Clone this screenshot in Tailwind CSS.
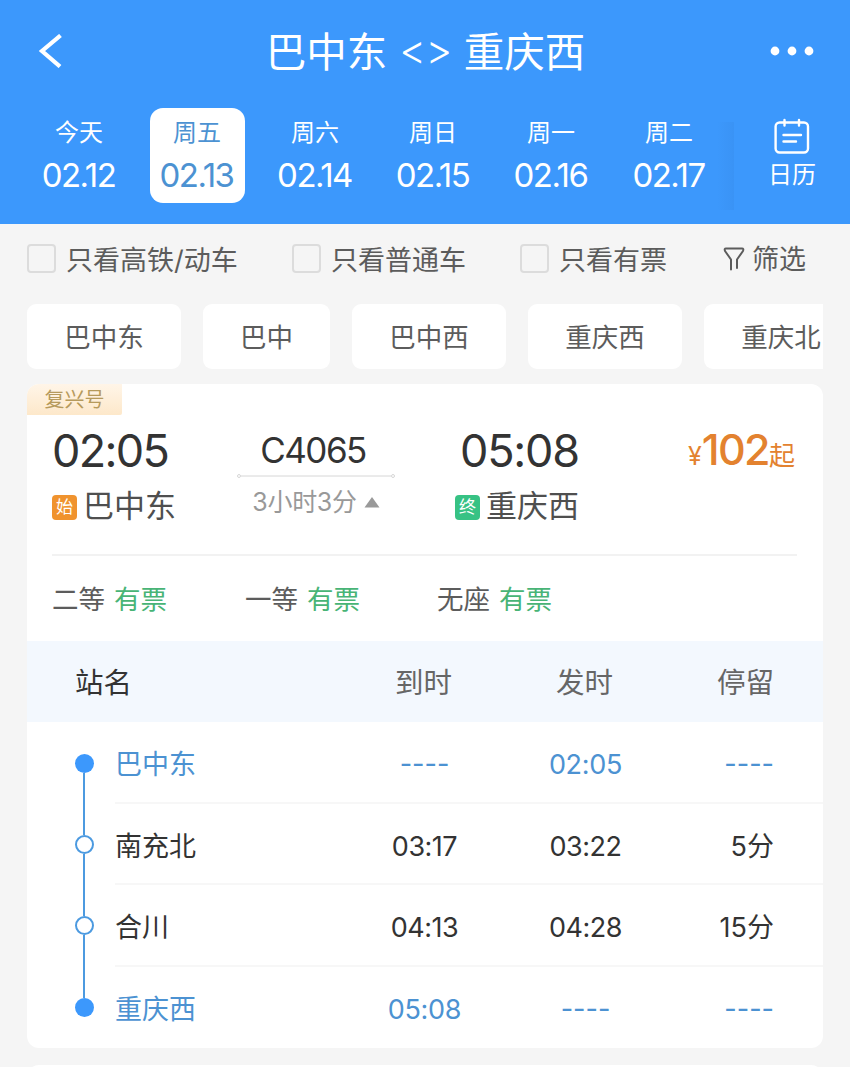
<!DOCTYPE html>
<html lang="zh">
<head>
  <meta charset="UTF-8" />
  <meta name="viewport" content="width=device-width, initial-scale=1.0">
  <title>巴中东 - 重庆西 车次列表</title>
  <script src="https://cdn.jsdelivr.net/npm/@tailwindcss/browser@4"></script>
</head>
<body class="bg-[#f5f5f5] text-[#333] font-['Inter','Noto_Sans_CJK_SC',sans-serif]">
<div class="h-[1067px] overflow-hidden">
  <!-- 顶部导航 + 日期 -->
  <header class="h-[224px] bg-[#3c98fc] text-white">
    <div class="flex h-[102px] items-center justify-between pl-[38px] pr-9">
      <svg class="h-[34px] w-[44px]" viewBox="0 0 44 34" fill="none" stroke="currentColor" stroke-width="4.2"><path d="M22.5 1.5 L4 17 L22 32.5" /></svg>
      <h1 class="mt-[4px] flex items-center gap-[12px] pr-px text-[40.5px] leading-none">
        <span>巴中东</span>
        <span class="pb-[6px] text-[41px] font-light tracking-[-0.5px]">&lt;&gt;</span>
        <span>重庆西</span>
      </h1>
      <svg class="h-[10px] w-[44px]" viewBox="0 0 44 10" fill="currentColor"><circle cx="5" cy="5" r="4.4" /><circle cx="22" cy="5" r="4.4" /><circle cx="39" cy="5" r="4.4" /></svg>
    </div>

    <div class="flex pl-8 pt-[6px]">
      <div class="flex gap-[23px] text-center">
        <div class="h-[95px] w-[95px] rounded-[13px] pt-[9px]">
          <p class="pr-px text-[24px] leading-[32px]">今天</p>
          <p class="mt-[6px] pr-[2px] text-[33px] leading-[40px] tracking-[-1.5px]">02.12</p>
        </div>
        <div class="h-[95px] w-[95px] rounded-[13px] bg-white pt-[9px] text-[#4c92d2]">
          <p class="pr-px text-[24px] leading-[32px]">周五</p>
          <p class="mt-[6px] pr-[2px] text-[33px] leading-[40px] tracking-[-1.5px]">02.13</p>
        </div>
        <div class="h-[95px] w-[95px] rounded-[13px] pt-[9px]">
          <p class="pr-px text-[24px] leading-[32px]">周六</p>
          <p class="mt-[6px] pr-[2px] text-[33px] leading-[40px] tracking-[-1.5px]">02.14</p>
        </div>
        <div class="h-[95px] w-[95px] rounded-[13px] pt-[9px]">
          <p class="pr-px text-[24px] leading-[32px]">周日</p>
          <p class="mt-[6px] pr-[2px] text-[33px] leading-[40px] tracking-[-1.5px]">02.15</p>
        </div>
        <div class="h-[95px] w-[95px] rounded-[13px] pt-[9px]">
          <p class="pr-px text-[24px] leading-[32px]">周一</p>
          <p class="mt-[6px] pr-[2px] text-[33px] leading-[40px] tracking-[-1.5px]">02.16</p>
        </div>
        <div class="h-[95px] w-[95px] rounded-[13px] pt-[9px]">
          <p class="pr-px text-[24px] leading-[32px]">周二</p>
          <p class="mt-[6px] pr-[2px] text-[33px] leading-[40px] tracking-[-1.5px]">02.17</p>
        </div>
      </div>
      <div class="mt-[14px] h-[88px] w-[17px] bg-linear-to-r from-[#3c98fc] to-[#3a93f5]"></div>
      <div class="flex flex-1 flex-col items-center pt-[10px]">
        <svg class="h-[36px] w-[36px]" viewBox="0 0 36 36" fill="none" stroke="currentColor" stroke-width="2.4" stroke-linecap="round"><rect x="1.6" y="4.5" width="32.4" height="30" rx="4" /><path d="M10.5 2V7.5 M25 2V7.5 M9.5 17H27 M9.5 23.5H22" /></svg>
        <p class="text-[24px] leading-[41px]">日历</p>
      </div>
    </div>
  </header>

  <!-- 筛选条件 -->
  <div class="flex h-[80px] items-center pb-[11px] pl-[27px] text-[27px] leading-none text-[#5c5c5c]">
    <div class="flex w-[265px] items-center gap-[10px]">
      <span class="h-[29px] w-[29px] rounded-[4px] border-2 border-[#dcdcdc]"></span>
      <span class="pt-[3px]">只看高铁/动车</span>
    </div>
    <div class="flex w-[228px] items-center gap-[10px]">
      <span class="h-[29px] w-[29px] rounded-[4px] border-2 border-[#dcdcdc]"></span>
      <span class="pt-[3px]">只看普通车</span>
    </div>
    <div class="flex w-[203px] items-center gap-[10px]">
      <span class="h-[29px] w-[29px] rounded-[4px] border-2 border-[#dcdcdc]"></span>
      <span class="pt-[3px]">只看有票</span>
    </div>
    <div class="flex items-center gap-[7px]">
      <svg class="h-[24px] w-[22px]" viewBox="0 0 22 24" fill="none" stroke="currentColor" stroke-width="2" stroke-linejoin="round" stroke-linecap="round"><path d="M8 22.5V12.5L2 4Q1 1.5 3 1.5H19Q21 1.5 20 4L14 12.5V21" /></svg>
      <span class="pt-[2px]">筛选</span>
    </div>
  </div>

  <!-- 车站 -->
  <div class="mx-[27px] flex h-[65px] gap-[22px] overflow-hidden text-[26.5px] leading-[67px] text-[#5c5c5c]">
    <span class="w-[154px] shrink-0 rounded-[9px] bg-white text-center">巴中东</span>
    <span class="w-[127px] shrink-0 rounded-[9px] bg-white text-center">巴中</span>
    <span class="w-[154px] shrink-0 rounded-[9px] bg-white text-center">巴中西</span>
    <span class="w-[154px] shrink-0 rounded-[9px] bg-white text-center">重庆西</span>
    <span class="w-[154px] shrink-0 rounded-[9px] bg-white text-center">重庆北</span>
  </div>

  <!-- 车次卡片 -->
  <section class="mx-[27px] mt-[15px] h-[664px] overflow-hidden rounded-[12px] bg-white">
    <div class="h-[31px] w-[95px] rounded-br-[2px] bg-linear-to-b from-[#fff5e8] to-[#fde8ca] text-center text-[20px] leading-[32px] text-[#b69a5c]">复兴号</div>

    <div class="flex h-[139px] pl-[25px] pr-[28px]">
      <div class="w-[185px] pt-[8px]">
        <p class="text-[45px] leading-[56px] tracking-[-1.7px]">02:05</p>
        <p class="flex items-center gap-[6px] pt-[7px] text-[31px] leading-[40px] text-[#4f4f4f]">
          <span class="mt-[2px] h-[25px] w-[25px] rounded-[4px] bg-[#f0932e] text-center text-[17px] leading-[25px] text-white">始</span>
          <span>巴中东</span>
        </p>
      </div>
      <div class="flex w-[158px] flex-col items-center pt-[13px]">
        <p class="pr-[6px] text-[35px] leading-[44px] tracking-[-1.5px]">C4065</p>
        <svg class="mt-[1px] h-[6px] w-[158px]" viewBox="0 0 158 6" fill="none" stroke="#d6d6d6"><circle cx="2" cy="3" r="1.5" /><path d="M4 3H154" /><circle cx="156" cy="3" r="1.5" /></svg>
        <p class="flex items-center gap-[7px] pt-[5px] text-[25px] leading-[36px] text-[#999]">
          <span class="tracking-[-0.3px]">3小时3分</span>
          <svg class="h-[12px] w-[16px]" viewBox="0 0 16 12" fill="currentColor"><path d="M8 1L15.5 11.5H.5Z" /></svg>
        </p>
      </div>
      <div class="ml-[60px] w-[160px] pt-[8px]">
        <p class="pl-[5px] text-[45px] leading-[56px] tracking-[-1.2px]">05:08</p>
        <p class="flex items-center gap-[6px] pt-[7px] text-[31px] leading-[40px] text-[#4f4f4f]">
          <span class="mt-[2px] h-[25px] w-[25px] rounded-[4px] bg-[#37c284] text-center text-[17px] leading-[25px] text-white">终</span>
          <span>重庆西</span>
        </p>
      </div>
      <p class="flex flex-1 items-baseline justify-end pt-[6px] leading-[56px] text-[#e3822f]">
        <span class="text-[25px]">¥</span>
        <span class="text-[43px] font-medium tracking-[-1.6px]">102</span>
        <span class="text-[26px]">起</span>
      </p>
    </div>

    <div class="ml-[25px] mr-[26px] flex h-[87px] border-t-2 border-[#f2f2f2] text-[26.5px] leading-[87px] text-[#5c5c5c]">
      <p class="w-[193px]">二等<span class="ml-[9px] text-[#48b476]">有票</span></p>
      <p class="w-[192px]">一等<span class="ml-[9px] text-[#48b476]">有票</span></p>
      <p>无座<span class="ml-[9px] text-[#48b476]">有票</span></p>
    </div>

    <!-- 经停站 -->
    <div class="flex h-[81px] bg-[#f3f8fe] pl-[48px] pr-[49px] text-[28.5px] leading-[84px] text-[#666]">
      <span class="w-[268px] text-[#333]">站名</span>
      <span class="w-[161px] text-center">到时</span>
      <span class="w-[161px] text-center">发时</span>
      <span class="flex-1 text-right">停留</span>
    </div>
    <div class="text-[27px] leading-[86px]">
      <div class="flex h-[81.5px] pl-[47px] text-[#4c92d2]">
        <div class="flex w-[20px] flex-col items-center pt-px">
          <i class="flex-1"></i>
          <i class="h-[19px] w-[19px] rounded-full bg-[#3c98fc]"></i>
          <i class="w-[2px] flex-1 bg-[#4c9ae0]"></i>
        </div>
        <div class="ml-[21px] flex flex-1 border-b-2 border-[#f7f7f7] pr-[49px]">
          <span class="w-[229px]">巴中东</span>
          <span class="w-[161px] text-center leading-[84px]">----</span>
          <span class="w-[161px] text-center tracking-[-0.3px]">02:05</span>
          <span class="flex-1 text-right leading-[84px]">----</span>
        </div>
      </div>
      <div class="flex h-[81.5px] pl-[47px]">
        <div class="flex w-[20px] flex-col items-center">
          <i class="w-[2px] flex-1 bg-[#4c9ae0]"></i>
          <i class="h-[19px] w-[19px] rounded-full border-2 border-[#4c9ae0]"></i>
          <i class="w-[2px] flex-1 bg-[#4c9ae0]"></i>
        </div>
        <div class="ml-[21px] flex flex-1 border-b-2 border-[#f7f7f7] pr-[49px]">
          <span class="w-[229px]">南充北</span>
          <span class="w-[161px] text-center tracking-[-0.5px]">03:17</span>
          <span class="w-[161px] text-center tracking-[-0.5px]">03:22</span>
          <span class="flex-1 text-right">5分</span>
        </div>
      </div>
      <div class="flex h-[81.5px] pl-[47px]">
        <div class="flex w-[20px] flex-col items-center">
          <i class="w-[2px] flex-1 bg-[#4c9ae0]"></i>
          <i class="h-[19px] w-[19px] rounded-full border-2 border-[#4c9ae0]"></i>
          <i class="w-[2px] flex-1 bg-[#4c9ae0]"></i>
        </div>
        <div class="ml-[21px] flex flex-1 border-b-2 border-[#f7f7f7] pr-[49px]">
          <span class="w-[229px]">合川</span>
          <span class="w-[161px] text-center tracking-[-0.5px]">04:13</span>
          <span class="w-[161px] text-center tracking-[-0.5px]">04:28</span>
          <span class="flex-1 text-right">15分</span>
        </div>
      </div>
      <div class="flex h-[81.5px] pl-[47px] text-[#4c92d2]">
        <div class="flex w-[20px] flex-col items-center">
          <i class="w-[2px] flex-1 bg-[#4c9ae0]"></i>
          <i class="h-[19px] w-[19px] rounded-full bg-[#3c98fc]"></i>
          <i class="flex-1"></i>
        </div>
        <div class="ml-[21px] flex flex-1 pr-[49px]">
          <span class="w-[229px]">重庆西</span>
          <span class="w-[161px] text-center tracking-[-0.3px]">05:08</span>
          <span class="w-[161px] text-center leading-[84px]">----</span>
          <span class="flex-1 text-right leading-[84px]">----</span>
        </div>
      </div>
    </div>
  </section>

  <!-- 下一个车次 -->
  <section class="mx-[27px] mt-[17px] h-[40px] rounded-[12px] bg-white"></section>
</div>
</body>
</html>
